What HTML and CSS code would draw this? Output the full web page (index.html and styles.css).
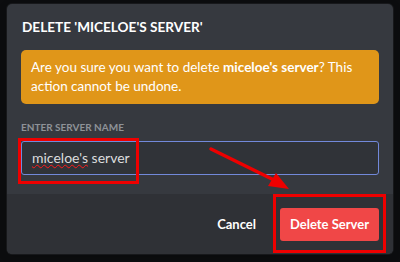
FILE: index.html
```html
<!DOCTYPE html>
<html>
<head>
  <meta charset="UTF-8">
  <title>Delete Server</title>
  <link rel="stylesheet" href="styles.css">
</head>
<body>
  <div class="screen">
    <div class="modal">
      <div class="modal-body">
        <h1 class="title">Delete 'miceloe's server'</h1>
        <div class="warning">
          Are you sure you want to delete <strong>miceloe's server</strong>? This action cannot be undone.
        </div>
        <label class="label">Enter Server Name</label>
        <div class="input"><span class="misspelled">miceloe's</span> server</div>
      </div>
      <div class="modal-footer">
        <button class="btn btn-cancel">Cancel</button>
        <button class="btn btn-delete">Delete Server</button>
      </div>
    </div>

    <!-- annotations drawn on top of the screenshot -->
    <div class="mark mark-input"></div>
    <div class="mark mark-button"></div>
    <svg class="arrow" width="400" height="262" viewBox="0 0 400 262">
      <line x1="211" y1="149" x2="276" y2="181" stroke="#ee0000" stroke-width="3.5" stroke-linecap="round"/>
      <polygon points="289,189 268,186 276,173" fill="#ee0000"/>
    </svg>
  </div>
</body>
</html>
```

FILE: styles.css
```css
body {
  margin: 0;
  background-color: #0c0d0f;
  font-family: Lato, "Open Sans", sans-serif;
  color: #dcddde;
}
.screen {
  position: relative;
  width: 400px;
  height: 262px;
  overflow: hidden;
  padding-top: 4px;
  box-sizing: border-box;
}
.modal {
  margin-left: 7px;
  width: 386px;
  height: 250px;
  background-color: #36393f;
  border-radius: 5px;
  overflow: hidden;
  display: flex;
  flex-direction: column;
  box-shadow: 0 0 0 1px rgba(32, 34, 37, 0.6), 0 2px 10px rgba(0, 0, 0, 0.2);
}
.modal-body {
  flex: 1;
  padding: 13px 14px 0 14px;
}
.title {
  margin: 0 0 0 1px;
  font-size: 13.6px;
  line-height: 20px;
  font-weight: 700;
  color: #fff;
  text-transform: uppercase;
}
.warning {
  margin-top: 13px;
  padding: 8px 10px;
  background-color: #e09619;
  border-radius: 5px;
  color: #fff;
  font-size: 13.5px;
  line-height: 19px;
}
.warning strong {
  font-weight: 700;
}
.label {
  display: block;
  margin-top: 16px;
  font-size: 10px;
  line-height: 14px;
  font-weight: 700;
  color: #8e9297;
  text-transform: uppercase;
}
.input {
  margin-top: 7px;
  height: 34px;
  box-sizing: border-box;
  padding: 0 10px;
  border: 1px solid #7289da;
  border-radius: 3px;
  background-color: #303338;
  color: #dcddde;
  font-size: 14px;
  line-height: 32px;
}
.misspelled {
  text-decoration: underline wavy #ff1a1a;
  text-decoration-thickness: 1px;
  text-decoration-skip-ink: none;
  text-underline-offset: 1px;
}
.modal-footer {
  height: 60px;
  background-color: #2f3136;
  display: flex;
  justify-content: flex-end;
  align-items: center;
  padding: 0 14px;
}
.btn {
  font-family: inherit;
  font-size: 13px;
  font-weight: 700;
  border: none;
  border-radius: 3px;
  height: 33px;
  color: #fff;
  white-space: nowrap;
  cursor: pointer;
}
.btn-cancel {
  background: none;
  padding: 0 24px 0 0;
}
.btn-delete {
  width: 99px;
  padding: 0;
  background-color: #f04747;
}
.mark {
  position: absolute;
  border: 3px solid #ee0000;
  box-sizing: border-box;
}
.mark-input {
  left: 18px;
  top: 138px;
  width: 121px;
  height: 46px;
}
.mark-button {
  left: 273px;
  top: 194px;
  width: 113px;
  height: 59px;
}
.arrow {
  position: absolute;
  left: 0;
  top: 0;
  pointer-events: none;
}
```
